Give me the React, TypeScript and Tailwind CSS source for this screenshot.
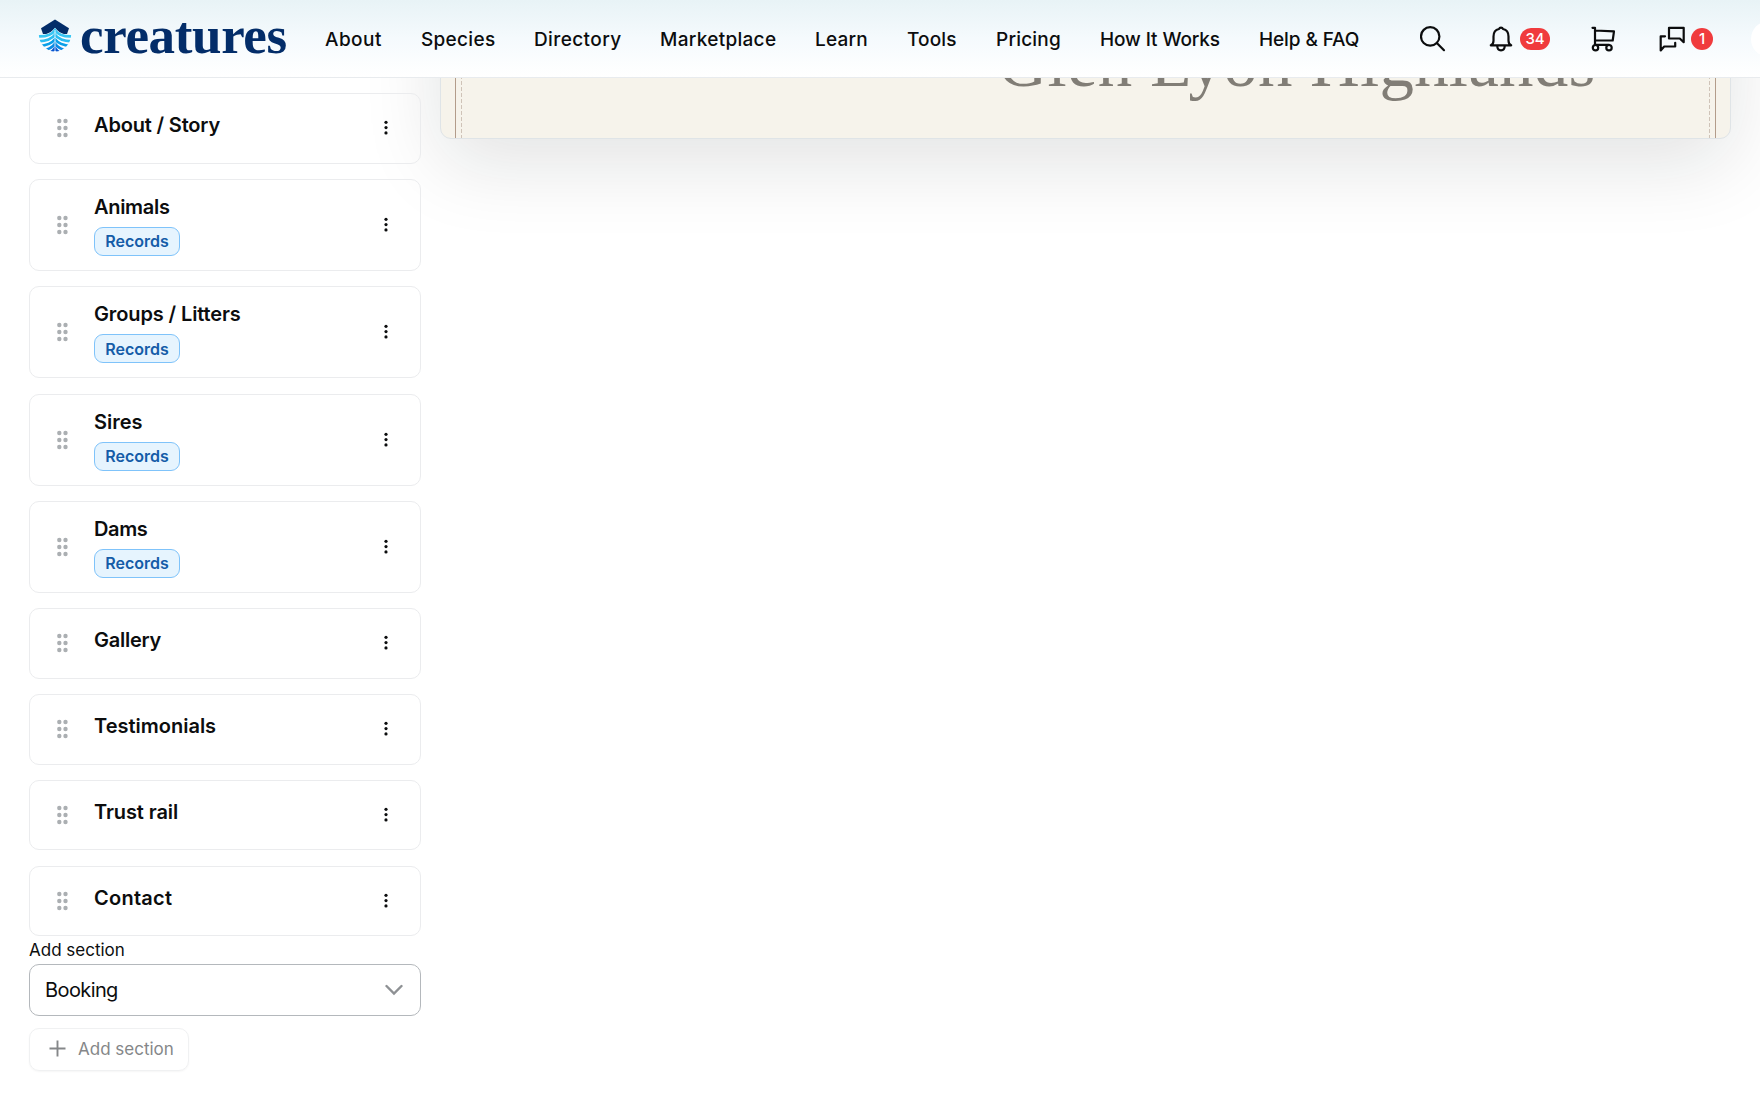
import type { ReactNode } from "react";

interface NavItem {
  label: string;
  className: string;
}

interface Section {
  title: string;
  className?: string;
  records?: boolean;
}

const NAV_ITEMS: NavItem[] = [
  { label: "About", className: "w-[57px] tracking-[0.45px]" },
  { label: "Species", className: "w-[74px] tracking-[0.3px]" },
  { label: "Directory", className: "w-[87px] tracking-[0.4px]" },
  { label: "Marketplace", className: "w-[116px] tracking-[0.3px]" },
  { label: "Learn", className: "w-[53px] tracking-[0.2px]" },
  { label: "Tools", className: "w-[50px] tracking-[0.15px]" },
  { label: "Pricing", className: "w-[65px] tracking-[0.2px]" },
  { label: "How It Works", className: "w-[120px] tracking-[-0.1px]" },
  { label: "Help & FAQ", className: "w-[101px] tracking-[-0.1px]" },
];

const SECTIONS: Section[] = [
  { title: "About / Story", className: "tracking-[-0.17px]" },
  { title: "Animals", className: "tracking-[-0.3px]", records: true },
  { title: "Groups / Litters", className: "tracking-[-0.12px]", records: true },
  { title: "Sires", records: true },
  { title: "Dams", className: "tracking-[-0.4px]", records: true },
  { title: "Gallery", className: "tracking-[-0.25px]" },
  { title: "Testimonials" },
  { title: "Trust rail", className: "tracking-[-0.1px]" },
  { title: "Contact", className: "tracking-[0.25px]" },
];

function LogoMark() {
  return (
    <svg width="34" height="34" viewBox="0 0 34 34" fill="none">
      <clipPath id="hull">
        <path d="M.8 15 17 4l16.200 11A16.200 17.500 0 0 1 .8 15Z" />
      </clipPath>
      <path d="M17 .6 31 9.200 29 15H5L3 9.200Z" fill="#032d69" />
      <path d="M4 15.300h3.500C11 14.500 14.500 12 17 8.800c2.500 3.200 6 5.700 9.500 6.500H30l-4 9H8Z" fill="#fff" />
      <g clipPath="url(#hull)" strokeWidth="2.700">
        <path d="M0 17.400c8 .3 14-1.700 17-6.200 3 4.500 9 6.500 17 6.200" stroke="#38c6f4" />
        <path d="M0 22.300c8-.4 14-2.200 17-6.600 3 4.400 9 6.200 17 6.600" stroke="#2abdf2" />
        <path d="M1 27.300c8-1 13-3 16-7.100 3 4.100 8 6.100 16 7.100" stroke="#0a9fe8" />
        <path d="M3 32c7-1.200 11.500-3.500 14-7.300 2.500 3.800 7 6.100 14 7.300" stroke="#0b8be4" />
        <path d="M8 35.500c4-1 7-3.200 9-6.300 2 3.100 5 5.300 9 6.300" stroke="#0755d0" />
      </g>
      <path d="M17 11v22.500" stroke="#fff" strokeWidth=".8" />
    </svg>
  );
}

function SearchIcon() {
  return (
    <svg width="26" height="26" viewBox="0 0 26 26" fill="none" stroke="#0c0d0e" strokeWidth="2.200">
      <circle cx="10.200" cy="10.400" r="9.200" />
      <path d="m16.800 17 7.200 7.200" strokeLinecap="round" />
    </svg>
  );
}

function BellIcon() {
  return (
    <svg width="24" height="26" viewBox="0 0 24 26" fill="none" stroke="#0c0d0e" strokeWidth="2.200" strokeLinejoin="round" strokeLinecap="round">
      <path d="M1.800 19.300h20.400c-1.800-.8-2.700-2.300-2.700-4.500v-4.300c0-4-2.300-6.800-5.500-7.500a2.100 2.100 0 0 0-4 0c-3.200.7-5.500 3.500-5.500 7.500v4.300c0 2.200-.9 3.700-2.700 4.500Z" />
      <path d="M8.300 20c0 3 1.500 4.300 3.700 4.300s3.700-1.300 3.700-4.300" />
    </svg>
  );
}

function CartIcon() {
  return (
    <svg width="24" height="26" viewBox="0 0 24 26" fill="none" stroke="#0c0d0e" strokeWidth="2.200" strokeLinejoin="round" strokeLinecap="round">
      <path d="M1.500 1.800H4v17M4 4.500l19 .8-1.300 9.200H4.200M4.500 18.800H18" />
      <circle cx="4.500" cy="21.700" r="2.700" />
      <circle cx="18" cy="21.700" r="2.700" />
    </svg>
  );
}

function MessagesIcon() {
  return (
    <svg width="26" height="26" viewBox="0 0 26 26" fill="none" stroke="#0c0d0e" strokeWidth="2.200" strokeLinejoin="round" strokeLinecap="round">
      <path d="M10 1.800h14.700v14.400l-3.900-3.700H10Z" />
      <path d="M6 10.300H1.700V24.500l3.500-4h11v-3.700" />
    </svg>
  );
}

function Badge({ children, className }: { children: ReactNode; className: string }) {
  return (
    <span className={`flex h-[22px] items-center justify-center rounded-full bg-[#f03b3d] text-[15px] font-medium text-white ${className}`}>
      {children}
    </span>
  );
}

function Header() {
  return (
    <header className="relative z-10 flex h-[78px] shrink-0 items-start border-b border-[#e8ebee] bg-linear-to-b from-[#e8f3f6] via-[#f5fafd] to-white">
      <a className="ml-[38px] flex w-[287px] shrink-0 pt-[19px]">
        <LogoMark />
        <span className="-mt-[14px] ml-[8px] font-['Liberation_Serif',serif] text-[53px] leading-[60px] font-bold tracking-[-0.350px] text-[#032d69]">
          creatures
        </span>
      </a>
      <nav className="flex shrink-0 gap-[39px] pt-[26px] text-[19px] leading-[28px] font-medium whitespace-nowrap">
        {NAV_ITEMS.map((item) => (
          <a key={item.label} className={item.className}>
            {item.label}
          </a>
        ))}
      </nav>
      <div className="flex grow items-start pt-[26px]">
        <div className="ml-[60px] w-[69px] shrink-0"><SearchIcon /></div>
        <div className="flex w-[102px] shrink-0 gap-[7px]">
          <BellIcon />
          <Badge className="mt-[2px] w-[30px]">34</Badge>
        </div>
        <div className="w-[68px] shrink-0"><CartIcon /></div>
        <div className="flex shrink-0 gap-[6px]">
          <MessagesIcon />
          <Badge className="mt-[2px] w-[22px]">1</Badge>
        </div>
        <div className="-mt-[5px] ml-[38px] size-[36px] shrink-0 rounded-full bg-white" />
      </div>
    </header>
  );
}

function DragHandle() {
  return (
    <svg width="12" height="20" viewBox="0 0 12 20" fill="#abafb2">
      {[3, 10, 17].map((y) => (
        <g key={y}>
          <circle cx="3.300" cy={y} r="2.200" />
          <circle cx="9.500" cy={y} r="2.200" />
        </g>
      ))}
    </svg>
  );
}

function MoreIcon() {
  return (
    <svg width="4" height="16" viewBox="0 0 4 16" fill="#0c0d0e">
      <circle cx="2" cy="2.300" r="1.600" />
      <circle cx="2" cy="7.600" r="1.600" />
      <circle cx="2" cy="12.900" r="1.600" />
    </svg>
  );
}

function SectionCard({ section }: { section: Section }) {
  return (
    <div
      className={`flex items-center rounded-[10px] border border-[#ebecee] pr-[32px] pl-[26px] ${
        section.records ? "h-[92px]" : "h-[70.500px]"
      }`}
    >
      <DragHandle />
      <div className={`ml-[26px] grow ${section.records ? "" : "-mt-[6px]"}`}>
        <div className={`text-[20px] leading-[26px] font-semibold ${section.className ?? ""}`}>
          {section.title}
        </div>
        {section.records && (
          <span className="mt-[7px] flex h-[29px] w-[86px] items-center justify-center rounded-[9px] border border-[#7fc3fa] bg-[#e6f4fe] text-[16px] font-semibold text-[#155ca8]">
            Records
          </span>
        )}
      </div>
      <MoreIcon />
    </div>
  );
}

function Sidebar() {
  return (
    <aside className="relative z-[1] ml-[29px] w-[391.500px] shrink-0 pt-[15px]">
      <div className="flex flex-col gap-[15.350px]">
        {SECTIONS.map((section) => (
          <SectionCard key={section.title} section={section} />
        ))}
      </div>
      <label className="block pt-[2px] text-[17px] leading-[24px]">Add section</label>
      <div className="mt-[2px] flex h-[52px] items-center justify-between rounded-[10px] border border-[#b4b8bc] bg-white pr-[17px] pl-[15px] text-[20px] tracking-[-0.6px]">
        Booking
        <svg width="18" height="12" viewBox="0 0 18 12" fill="none" stroke="#8e9194" strokeWidth="2.400" strokeLinecap="round">
          <path d="m1.500 2 7.500 7.500L16.500 2" />
        </svg>
      </div>
      <button className="mt-[12px] flex h-[43px] w-[160px] items-center gap-[12px] rounded-[10px] border border-[#f0f1f2] pl-[19px] text-[17px] whitespace-nowrap text-[#858789] shadow-[0_1px_2px_rgba(0,0,0,0.04)]">
        <svg className="-mt-[2px]" width="17" height="17" viewBox="0 0 17 17" stroke="#858789" strokeWidth="1.900">
          <path d="M8.500 .5v16M.5 8.500h16" />
        </svg>
        Add section
      </button>
    </aside>
  );
}

function DashedRule() {
  return <div className="w-px bg-[repeating-linear-gradient(to_bottom,#cfc3b8_0_4px,transparent_4px_6px)]" />;
}

// Bottom edge of the storefront hero, scrolled up under the header
function HeroPreview() {
  return (
    <section className="-mt-[400px] ml-[19.500px] flex h-[461px] w-[1290.500px] shrink-0 rounded-[11px] border border-[#dfe4e7] bg-[#f6f3eb] shadow-[0_24px_80px_rgba(15,23,25,0.12)]">
      <div className="ml-[14px] w-px bg-[#b39c8a]" />
      <div className="ml-[5px] flex"><DashedRule /></div>
      <div className="flex grow items-end justify-end pr-[113px] pb-[39px]">
        <h1 className="font-['Liberation_Serif',serif] text-[69px] leading-[72px] tracking-[0.2px] whitespace-nowrap text-[#817d76]">
          Glen Lyon Highlands
        </h1>
      </div>
      <div className="mr-[5px] flex"><DashedRule /></div>
      <div className="mr-[14px] w-px bg-[#b39c8a]" />
    </section>
  );
}

export default function App() {
  return (
    <div className="flex h-[1100px] w-[1760px] flex-col overflow-hidden bg-white font-[Inter,sans-serif] text-[#0c0d0e]">
      <Header />
      <main className="flex items-start">
        <Sidebar />
        <HeroPreview />
      </main>
    </div>
  );
}
